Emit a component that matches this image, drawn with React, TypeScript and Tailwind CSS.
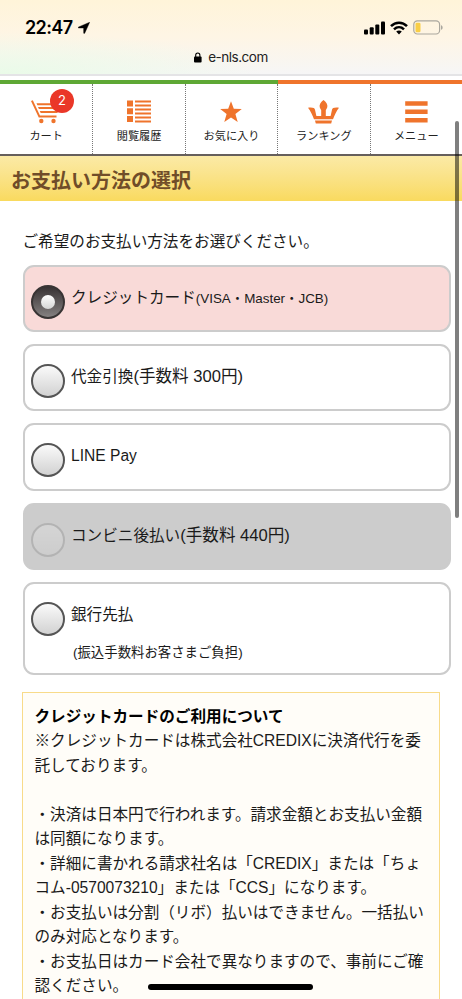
import type { ReactNode } from "react";
import clsx from "clsx";

function StatusBar() {
  return (
    <div className="flex h-[44px] items-start justify-between pl-[25px] pr-[19px] pt-[18px]">
      <div className="flex items-center gap-[5px]">
        <span className="font-['Inter'] text-[18px] font-semibold leading-[19px] tracking-[-0.6px] text-black">
          22:47
        </span>
        <svg className="h-[12px] w-[12px]" viewBox="0 0 12 12">
          <path
            d="M11.7.2.6 5c-.7.3-.6 1 .1 1h4.9l.1 5c0 .7.8.8 1.1.1z"
            fill="#000"
            stroke="#000"
            strokeWidth=".4"
            strokeLinejoin="round"
          />
        </svg>
      </div>
      <div className="flex items-center pt-[2px]">
        <svg className="h-[14px] w-[21px]" viewBox="0 0 21 14">
          <rect x="0" y="8.5" width="4" height="5" rx="1" />
          <rect x="5.7" y="6.3" width="4" height="7.2" rx="1" />
          <rect x="11.3" y="3.6" width="4" height="9.9" rx="1" />
          <rect x="17" y=".6" width="4" height="12.9" rx="1" />
        </svg>
        <svg className="ml-[5px] h-[14px] w-[18px]" viewBox="0 0 18 14">
          <g fill="none" stroke="#000" strokeWidth="2.5">
            <path d="M1 5.2C5.5.6 12.5.6 17 5.2" />
            <path d="M4 8.4c2.9-2.8 7.1-2.8 10 0" />
          </g>
          <path d="m6.2 10.5 2.8 2.9 2.8-2.9c-1.6-1.4-4-1.4-5.6 0z" />
        </svg>
        <svg className="ml-[5px] h-[15px] w-[30px]" viewBox="0 0 30 15">
          <rect
            x=".8"
            y=".8"
            width="25.8"
            height="13.2"
            rx="3.6"
            fill="none"
            stroke="#aaa79e"
            strokeWidth="1.2"
          />
          <rect x="2.5" y="2.7" width="5" height="9.6" rx="1.4" fill="#f9ce46" />
          <path d="M28 5.2c2.2.6 2.2 4 0 4.6z" fill="#aaa79e" />
        </svg>
      </div>
    </div>
  );
}

function AddressBar() {
  return (
    <div className="flex h-[30px] justify-center gap-[6px] pt-[5px]">
      <svg className="mt-[3px] h-[11px] w-[8px]" viewBox="0 0 8 11">
        <rect x="0" y="4.6" width="7.6" height="6" rx="1" />
        <path
          d="M1.7 5V3.2C1.7.2 5.9.2 5.9 3.2V5"
          fill="none"
          stroke="#000"
          strokeWidth="1.1"
        />
      </svg>
      <span className="font-['Inter'] text-[13.5px] leading-[17px] tracking-[-0.5px] text-[#222]">
        e-nls.com
      </span>
    </div>
  );
}

function CartIcon() {
  return (
    <svg className="h-[26px] w-[30px]" viewBox="0 0 30 26" fill="#ef742c">
      <path
        d="M.9 1.6 8.4 17.6H25.5"
        fill="none"
        stroke="#ef742c"
        strokeWidth="2"
      />
      <path d="M5.5 4.2h22v2H6.4zM7 8h20.5l-.4 2H7.900zM8.800 12h18l-.4 2H9.700z" />
      <circle cx="10.3" cy="22" r="2.2" />
      <circle cx="22.5" cy="22" r="2.2" />
    </svg>
  );
}

function HistoryIcon() {
  return (
    <svg className="h-[23px] w-[24px]" viewBox="0 0 24 23" fill="#ef742c">
      <path d="M0 .5h6v6H0zM0 8.2h6v6H0zM0 16h6v6H0z" />
      <path
        d="M8 1.5h16M8 5.5h16M8 9.5h16M8 13.5h16M8 17.5h16M8 21.5h16"
        stroke="#ef742c"
        strokeWidth="1.8"
      />
    </svg>
  );
}

function StarIcon() {
  return (
    <svg className="h-[22px] w-[22px]" viewBox="0 0 22 22" fill="#ef742c">
      <path d="M11 .2l2.8 7.6 8 .2-6.4 5 2.3 7.9L11 16.400l-6.700 4.500 2.300-7.900L.2 8l8-.2z" />
    </svg>
  );
}

function CrownIcon() {
  return (
    <svg className="h-[24px] w-[31px]" viewBox="0 0 31 24" fill="#ef742c">
      <path d="M15.5 0C18 2 20 4.5 19.300 7C19 8.500 18.200 9.300 17.800 10.200V16H22.600L24 9.800C24.400 7.900 26 7.300 31 7.700C28.500 11 26.500 15 25 19.300H6C4.500 15 2.500 11 0 7.700C5 7.300 6.600 7.900 7 9.800L8.400 16H13.200V10.200C12.800 9.300 12 8.500 11.700 7C11 4.500 13 2 15.500 0Z" />
      <path d="M7 20.600h17l-.8 2.800H7.800z" />
    </svg>
  );
}

function MenuIcon() {
  return (
    <svg className="h-[22px] w-[23px]" viewBox="0 0 23 22" fill="#ef742c">
      <path d="M.2.2h22.400v4.500H.2zM.2 8.600h22.400v4.500H.2zM.2 17h22.400v4.500H.2z" />
    </svg>
  );
}

const navItems = [
  { label: "カート", icon: <CartIcon />, badge: 2 },
  { label: "閲覧履歴", icon: <HistoryIcon /> },
  { label: "お気に入り", icon: <StarIcon /> },
  { label: "ランキング", icon: <CrownIcon /> },
  { label: "メニュー", icon: <MenuIcon /> },
];

function NavBar() {
  return (
    <nav className="mt-[3.5px]">
      <div className="flex h-[4px]">
        <div className="w-[277.5px] bg-[#5ea835]" />
        <div className="grow bg-[#ef742c]" />
      </div>
      <ul className="grid h-[72.5px] grid-cols-5 border-b-2 border-[#665f5c]">
        {navItems.map((item, i) => (
          <li
            key={item.label}
            className={clsx(
              "relative flex flex-col items-center",
              i > 0 && "border-l border-dotted border-[#777]",
            )}
          >
            <div className="mt-[1px] flex h-[54px] items-center justify-center">
              {item.icon}
            </div>
            <span className="-mt-[11px] whitespace-nowrap text-[11.2px] leading-[16px] text-[#222]">
              {item.label}
            </span>
            {item.badge && (
              <span className="absolute left-[50px] top-[5px] flex h-[24px] w-[24px] items-center justify-center rounded-full bg-[#ea3728] font-['Inter'] text-[13px] text-white">
                {item.badge}
              </span>
            )}
          </li>
        ))}
      </ul>
    </nav>
  );
}

function Radio({ checked, disabled }: { checked?: boolean; disabled?: boolean }) {
  return (
    <span
      className={clsx(
        "mt-[18px] flex h-[34px] w-[34px] shrink-0 items-center justify-center rounded-full border-2",
        checked
          ? "border-[#383434] bg-linear-to-b from-[#383334] to-[#858181]"
          : "border-[#555] bg-linear-to-b from-[#fafafa] to-[#d2d2d2]",
        disabled && "opacity-20",
      )}
    >
      {checked && (
        <span className="h-[14px] w-[14px] rounded-full bg-linear-to-b from-white to-[#d5d5d5]" />
      )}
    </span>
  );
}

type OptionProps = {
  children: ReactNode;
  note?: string;
  checked?: boolean;
  disabled?: boolean;
};

function PaymentOption({ children, note, checked, disabled }: OptionProps) {
  return (
    <label
      className={clsx(
        "flex rounded-[11px] border-2 border-[#ccc] pl-[6.5px]",
        note ? "h-[93px]" : "h-[67.2px]",
        checked && "bg-[#f9dad8]",
        disabled && "bg-[#ccc]",
      )}
    >
      <Radio checked={checked} disabled={disabled} />
      <div className="ml-[6px] pt-[19px] leading-[24px]">
        <div>{children}</div>
        {note && <div className="ml-[2px] mt-[14px] text-[13.4px]">{note}</div>}
      </div>
    </label>
  );
}

function Fee({ amount }: { amount: number }) {
  return <span className="text-[16.6px]">(手数料 {amount}円)</span>;
}

export default function App() {
  return (
    <div className="relative h-[999px] w-[462px] overflow-hidden bg-white font-['Liberation_Sans','Noto_Sans_CJK_JP',sans-serif] text-[15.6px] text-[#1a1a1a]">
      <header className="h-[76px] border-b-2 border-[#e4e4e6] bg-[radial-gradient(ellipse_at_0%_100%,#eafbe8_0%,transparent_40%),linear-gradient(to_bottom,#fff4d9,#fef5e5_50%,#f6f6f6)]">
        <StatusBar />
        <AddressBar />
      </header>

      <NavBar />

      <h1 className="h-[45px] bg-linear-to-b from-[#fbeaa6] to-[#f9da5e] pl-[11px] text-[20px] font-bold leading-[50px] text-[#704d29]">
        お支払い方法の選択
      </h1>

      <main className="pl-[22.5px]">
        <p className="pt-[29px] leading-[24px]">
          ご希望のお支払い方法をお選びください。
        </p>
        <div className="mt-[11px] flex w-[428.5px] flex-col gap-[12px]">
          <PaymentOption checked>
            クレジットカード
            <span className="text-[13.4px]">(VISA・Master・JCB)</span>
          </PaymentOption>
          <PaymentOption>
            代金引換
            <Fee amount={300} />
          </PaymentOption>
          <PaymentOption>LINE Pay</PaymentOption>
          <PaymentOption disabled>
            コンビニ後払い
            <Fee amount={440} />
          </PaymentOption>
          <PaymentOption note="(振込手数料お客さまご負担)">銀行先払</PaymentOption>
        </div>

        <section className="-ml-[0.5px] mt-[17px] h-[330px] w-[418px] whitespace-nowrap border border-[#f8db8a] bg-[#fffdf8] pl-[11.5px] pt-[12px] leading-[24.5px]">
          <h2 className="font-bold text-black">クレジットカードのご利用について</h2>
          <p>
            ※クレジットカードは株式会社CREDIXに決済代行を委
            <br />
            託しております。
          </p>
          <p className="mt-[24.5px]">
            ・決済は日本円で行われます。請求金額とお支払い金額
            <br />
            は同額になります。
          </p>
          <p>
            ・詳細に書かれる請求社名は「CREDIX」または「ちょ
            <br />
            コム-0570073210」または「CCS」になります。
          </p>
          <p>
            ・お支払いは分割（リボ）払いはできません。一括払い
            <br />
            のみ対応となります。
          </p>
          <p>
            ・お支払日はカード会社で異なりますので、事前にご確
            <br />
            認ください。
          </p>
        </section>
      </main>

      {/* scroll thumb and home indicator */}
      <div className="absolute left-[455px] top-[121px] h-[397px] w-[4px] rounded-full bg-black/50" />
      <div className="absolute left-[148px] top-[984px] h-[6px] w-[165px] rounded-full bg-black" />
    </div>
  );
}
